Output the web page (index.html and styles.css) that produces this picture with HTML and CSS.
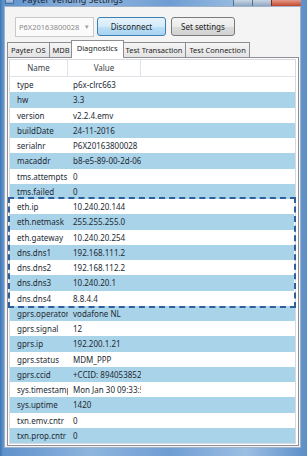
FILE: index.html
```html
<!DOCTYPE html>
<html>
<head>
  <title>Payter Vending Settings</title>
  <meta content="width=device-width, initial-scale=1" name="viewport" />
  <link rel="stylesheet" href="styles.css">
</head>
<body>
  <div class="frame">
    <div class="titlebar">
      <span class="appIcon"></span>
      <span class="title">Payter Vending Settings</span>
      <div class="captionButtons">
        <span class="capBtn"></span>
        <span class="capBtn"></span>
        <span class="capBtn close"></span>
      </div>
    </div>

    <div class="client">
      <div class="toolbar">
        <div class="combo">
          <span class="comboText">P6X20163800028</span>
          <span class="comboArrow">&#9662;</span>
        </div>
        <button type="button" class="btn btnActive">Disconnect</button>
        <button type="button" class="btn">Set settings</button>
      </div>

      <div class="tabs">
        <span class="tab">Payter OS</span>
        <span class="tab">MDB</span>
        <span class="tab tabSelected">Diagnostics</span>
        <span class="tab">Test Transaction</span>
        <span class="tab">Test Connection</span>
      </div>

      <div class="panel">
        <div class="grid">
          <div class="row headerRow">
            <span class="cell nameCell">Name</span>
            <span class="cell valueCell">Value</span>
          </div>
          <div class="row"><span class="cell nameCell">type</span><span class="cell valueCell">p6x-clrc663</span></div>
          <div class="row alt"><span class="cell nameCell">hw</span><span class="cell valueCell">3.3</span></div>
          <div class="row"><span class="cell nameCell">version</span><span class="cell valueCell">v2.2.4.emv</span></div>
          <div class="row alt"><span class="cell nameCell">buildDate</span><span class="cell valueCell">24-11-2016</span></div>
          <div class="row"><span class="cell nameCell">serialnr</span><span class="cell valueCell">P6X20163800028</span></div>
          <div class="row alt"><span class="cell nameCell">macaddr</span><span class="cell valueCell">b8-e5-89-00-2d-06</span></div>
          <div class="row"><span class="cell nameCell">tms.attempts</span><span class="cell valueCell">0</span></div>
          <div class="row alt"><span class="cell nameCell">tms.failed</span><span class="cell valueCell">0</span></div>
          <div class="highlight">
            <div class="row"><span class="cell nameCell">eth.ip</span><span class="cell valueCell">10.240.20.144</span></div>
            <div class="row alt"><span class="cell nameCell">eth.netmask</span><span class="cell valueCell">255.255.255.0</span></div>
            <div class="row"><span class="cell nameCell">eth.gateway</span><span class="cell valueCell">10.240.20.254</span></div>
            <div class="row alt"><span class="cell nameCell">dns.dns1</span><span class="cell valueCell">192.168.111.2</span></div>
            <div class="row"><span class="cell nameCell">dns.dns2</span><span class="cell valueCell">192.168.112.2</span></div>
            <div class="row alt"><span class="cell nameCell">dns.dns3</span><span class="cell valueCell">10.240.20.1</span></div>
            <div class="row"><span class="cell nameCell">dns.dns4</span><span class="cell valueCell">8.8.4.4</span></div>
          </div>
          <div class="row alt"><span class="cell nameCell">gprs.operator</span><span class="cell valueCell">vodafone NL</span></div>
          <div class="row"><span class="cell nameCell">gprs.signal</span><span class="cell valueCell">12</span></div>
          <div class="row alt"><span class="cell nameCell">gprs.ip</span><span class="cell valueCell">192.200.1.21</span></div>
          <div class="row"><span class="cell nameCell">gprs.status</span><span class="cell valueCell">MDM_PPP</span></div>
          <div class="row alt"><span class="cell nameCell">gprs.ccid</span><span class="cell valueCell">+CCID: 894053852</span></div>
          <div class="row"><span class="cell nameCell">sys.timestamp</span><span class="cell valueCell">Mon Jan 30 09:33:5</span></div>
          <div class="row alt"><span class="cell nameCell">sys.uptime</span><span class="cell valueCell">1420</span></div>
          <div class="row"><span class="cell nameCell">txn.emv.cntr</span><span class="cell valueCell">0</span></div>
          <div class="row alt"><span class="cell nameCell">txn.prop.cntr</span><span class="cell valueCell">0</span></div>
        </div>
      </div>
    </div>
  </div>
</body>
</html>
```

FILE: styles.css
```css
body {
  margin: 0;
  font-family: "Noto Sans", "Open Sans", sans-serif;
  font-size: 8px;
  color: #232a33;
}
.frame {
  width: 307px;
  height: 456px;
  box-sizing: border-box;
  padding: 0 6px 8px 4px;
  display: flex;
  flex-direction: column;
  background: linear-gradient(90deg, #3f74b4 0, #5f92cc 3px, #8fb5de 30%, #6f9dd3 55%, #9cbfe3 80%, #5d8ec8 100%);
}
.titlebar {
  height: 9px;
  display: flex;
  align-items: flex-end;
  overflow: hidden;
}
.appIcon {
  width: 7px;
  height: 5px;
  margin: 0 8px 2px 1px;
  background: linear-gradient(#d7e6f5, #7aa3cf);
  border: 1px solid #4a6e96;
}
.title {
  font-size: 9px;
  line-height: 10px;
  color: #1c2733;
  margin-bottom: 1px;
}
.captionButtons {
  margin-left: auto;
  display: flex;
  align-self: flex-start;
  margin-right: -1px;
}
.capBtn {
  width: 18px;
  height: 6px;
  background: linear-gradient(#c8d6e6, #8ea7c2);
  border: 1px solid #56708e;
  border-top: none;
  margin-left: -1px;
}
.capBtn.close {
  width: 29px;
  background: linear-gradient(#e39a8a, #c4452f);
  border-color: #7d2a1d;
}
.client {
  flex: 1;
  background: #f4f4f4;
  border: 1px solid #9fb2c9;
  display: flex;
  flex-direction: column;
  padding: 0 1px 1px 2px;
}
.toolbar {
  display: flex;
  align-items: center;
  height: 21px;
  margin-top: 9px;
  padding-left: 8px;
}
.combo {
  width: 79px;
  height: 20px;
  box-sizing: border-box;
  border: 1px solid #c9c9c9;
  background: #fbfbfb;
  display: flex;
  align-items: center;
  padding: 0 4px 0 3px;
  color: #8a8a8a;
  font-size: 7.5px;
}
.comboArrow {
  margin-left: auto;
  font-size: 7px;
  color: #a0a0a0;
}
.btn {
  font-family: inherit;
  font-size: 8px;
  height: 19px;
  padding: 0;
  margin-left: 5px;
  border: 1px solid #7a7a7a;
  border-radius: 3px;
  background: linear-gradient(#f4f4f4 0, #ebebeb 50%, #dcdcdc 51%, #d2d2d2 100%);
  color: #1d1d1d;
  width: 64px;
}
.btnActive {
  margin-left: 3px;
  width: 69px;
  border-color: #3c7fb1;
  background: linear-gradient(#e6f3fb 0, #d4ebf9 50%, #bde0f6 51%, #a7d3f1 100%);
}
.tabs {
  display: flex;
  align-items: flex-end;
  height: 17px;
  margin-top: 3px;
  position: relative;
  z-index: 1;
}
.tab {
  height: 14px;
  line-height: 14px;
  padding: 0 3px;
  border: 1px solid #8c8e94;
  border-bottom: none;
  margin-right: -1px;
  background: linear-gradient(#f5f5f5, #e3e3e3);
  color: #1d1d1d;
  white-space: nowrap;
  font-size: 7.5px;
}
.tabSelected {
  height: 17px;
  line-height: 15px;
  background: #ffffff;
  padding: 0 5px;
  margin: 0 -2px -1px -2px;
  position: relative;
  z-index: 2;
}
.panel {
  flex: 1;
  background: #ffffff;
  border: 1px solid #8c8e94;
  padding: 1px 2px 1px 1px;
  display: flex;
}
.grid {
  flex: 1;
  border: 1px solid #d6d9de;
  background: #ffffff;
}
.row {
  display: flex;
  height: 15.26px;
  line-height: 15px;
  white-space: nowrap;
}
.row.alt {
  background: #a9d3e9;
}
.headerRow {
  height: 16px;
  border-bottom: 1px solid #e0e3e8;
  color: #3a3f46;
}
.headerRow .cell {
  text-align: center;
  padding: 0;
  border-right: 1px solid #e0e3e8;
}
.cell {
  overflow: hidden;
  box-sizing: border-box;
}
.nameCell {
  width: 58px;
  padding-left: 7px;
}
.valueCell {
  width: 73px;
  padding-left: 5px;
}
.highlight {
  outline: 2px dashed #2e5e9c;
  outline-offset: 0;
  margin: 0 1px 0 0;
}
```
